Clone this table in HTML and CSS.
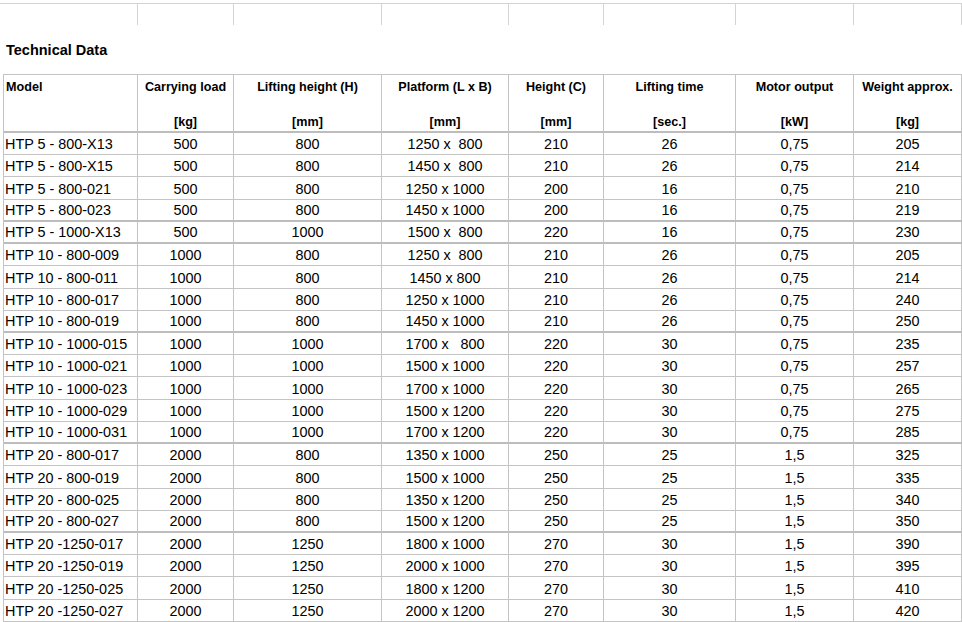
FILE: index.html
```html
<!DOCTYPE html>
<html lang="en">
<head>
<meta charset="utf-8">
<title>Technical Data</title>
<link rel="stylesheet" href="styles.css">
</head>
<body>
<div class="top-strip">
  <div class="strip-cell strip-lead"></div>
  <div class="strip-cell"></div><div class="strip-cell"></div><div class="strip-cell"></div><div class="strip-cell"></div>
  <div class="strip-cell"></div><div class="strip-cell"></div><div class="strip-cell"></div><div class="strip-cell"></div>
</div>
<h1 class="title">Technical Data</h1>
<div class="sheet">
  <div class="row head sep">
    <div class="cell left"><span class="h1l">Model</span></div>
    <div class="cell"><span class="h1l">Carrying load</span><span class="unit">[kg]</span></div>
    <div class="cell"><span class="h1l">Lifting height (H)</span><span class="unit">[mm]</span></div>
    <div class="cell"><span class="h1l">Platform (L x B)</span><span class="unit">[mm]</span></div>
    <div class="cell"><span class="h1l">Height (C)</span><span class="unit">[mm]</span></div>
    <div class="cell"><span class="h1l">Lifting time</span><span class="unit">[sec.]</span></div>
    <div class="cell"><span class="h1l">Motor output</span><span class="unit">[kW]</span></div>
    <div class="cell"><span class="h1l">Weight approx.</span><span class="unit">[kg]</span></div>
  </div>
  <div class="row"><div class="cell left">HTP 5 - 800-X13</div><div class="cell">500</div><div class="cell">800</div><div class="cell">1250 x  800</div><div class="cell">210</div><div class="cell">26</div><div class="cell">0,75</div><div class="cell">205</div></div>
  <div class="row"><div class="cell left">HTP 5 - 800-X15</div><div class="cell">500</div><div class="cell">800</div><div class="cell">1450 x  800</div><div class="cell">210</div><div class="cell">26</div><div class="cell">0,75</div><div class="cell">214</div></div>
  <div class="row"><div class="cell left">HTP 5 - 800-021</div><div class="cell">500</div><div class="cell">800</div><div class="cell">1250 x 1000</div><div class="cell">200</div><div class="cell">16</div><div class="cell">0,75</div><div class="cell">210</div></div>
  <div class="row sep"><div class="cell left">HTP 5 - 800-023</div><div class="cell">500</div><div class="cell">800</div><div class="cell">1450 x 1000</div><div class="cell">200</div><div class="cell">16</div><div class="cell">0,75</div><div class="cell">219</div></div>
  <div class="row sep"><div class="cell left">HTP 5 - 1000-X13</div><div class="cell">500</div><div class="cell">1000</div><div class="cell">1500 x  800</div><div class="cell">220</div><div class="cell">16</div><div class="cell">0,75</div><div class="cell">230</div></div>
  <div class="row"><div class="cell left">HTP 10 - 800-009</div><div class="cell">1000</div><div class="cell">800</div><div class="cell">1250 x  800</div><div class="cell">210</div><div class="cell">26</div><div class="cell">0,75</div><div class="cell">205</div></div>
  <div class="row"><div class="cell left">HTP 10 - 800-011</div><div class="cell">1000</div><div class="cell">800</div><div class="cell">1450 x 800</div><div class="cell">210</div><div class="cell">26</div><div class="cell">0,75</div><div class="cell">214</div></div>
  <div class="row"><div class="cell left">HTP 10 - 800-017</div><div class="cell">1000</div><div class="cell">800</div><div class="cell">1250 x 1000</div><div class="cell">210</div><div class="cell">26</div><div class="cell">0,75</div><div class="cell">240</div></div>
  <div class="row sep"><div class="cell left">HTP 10 - 800-019</div><div class="cell">1000</div><div class="cell">800</div><div class="cell">1450 x 1000</div><div class="cell">210</div><div class="cell">26</div><div class="cell">0,75</div><div class="cell">250</div></div>
  <div class="row"><div class="cell left">HTP 10 - 1000-015</div><div class="cell">1000</div><div class="cell">1000</div><div class="cell">1700 x   800</div><div class="cell">220</div><div class="cell">30</div><div class="cell">0,75</div><div class="cell">235</div></div>
  <div class="row"><div class="cell left">HTP 10 - 1000-021</div><div class="cell">1000</div><div class="cell">1000</div><div class="cell">1500 x 1000</div><div class="cell">220</div><div class="cell">30</div><div class="cell">0,75</div><div class="cell">257</div></div>
  <div class="row"><div class="cell left">HTP 10 - 1000-023</div><div class="cell">1000</div><div class="cell">1000</div><div class="cell">1700 x 1000</div><div class="cell">220</div><div class="cell">30</div><div class="cell">0,75</div><div class="cell">265</div></div>
  <div class="row"><div class="cell left">HTP 10 - 1000-029</div><div class="cell">1000</div><div class="cell">1000</div><div class="cell">1500 x 1200</div><div class="cell">220</div><div class="cell">30</div><div class="cell">0,75</div><div class="cell">275</div></div>
  <div class="row sep"><div class="cell left">HTP 10 - 1000-031</div><div class="cell">1000</div><div class="cell">1000</div><div class="cell">1700 x 1200</div><div class="cell">220</div><div class="cell">30</div><div class="cell">0,75</div><div class="cell">285</div></div>
  <div class="row"><div class="cell left">HTP 20 - 800-017</div><div class="cell">2000</div><div class="cell">800</div><div class="cell">1350 x 1000</div><div class="cell">250</div><div class="cell">25</div><div class="cell">1,5</div><div class="cell">325</div></div>
  <div class="row"><div class="cell left">HTP 20 - 800-019</div><div class="cell">2000</div><div class="cell">800</div><div class="cell">1500 x 1000</div><div class="cell">250</div><div class="cell">25</div><div class="cell">1,5</div><div class="cell">335</div></div>
  <div class="row"><div class="cell left">HTP 20 - 800-025</div><div class="cell">2000</div><div class="cell">800</div><div class="cell">1350 x 1200</div><div class="cell">250</div><div class="cell">25</div><div class="cell">1,5</div><div class="cell">340</div></div>
  <div class="row sep"><div class="cell left">HTP 20 - 800-027</div><div class="cell">2000</div><div class="cell">800</div><div class="cell">1500 x 1200</div><div class="cell">250</div><div class="cell">25</div><div class="cell">1,5</div><div class="cell">350</div></div>
  <div class="row"><div class="cell left">HTP 20 -1250-017</div><div class="cell">2000</div><div class="cell">1250</div><div class="cell">1800 x 1000</div><div class="cell">270</div><div class="cell">30</div><div class="cell">1,5</div><div class="cell">390</div></div>
  <div class="row"><div class="cell left">HTP 20 -1250-019</div><div class="cell">2000</div><div class="cell">1250</div><div class="cell">2000 x 1000</div><div class="cell">270</div><div class="cell">30</div><div class="cell">1,5</div><div class="cell">395</div></div>
  <div class="row"><div class="cell left">HTP 20 -1250-025</div><div class="cell">2000</div><div class="cell">1250</div><div class="cell">1800 x 1200</div><div class="cell">270</div><div class="cell">30</div><div class="cell">1,5</div><div class="cell">410</div></div>
  <div class="row"><div class="cell left">HTP 20 -1250-027</div><div class="cell">2000</div><div class="cell">1250</div><div class="cell">2000 x 1200</div><div class="cell">270</div><div class="cell">30</div><div class="cell">1,5</div><div class="cell">420</div></div>
</div>
</body>
</html>
```
FILE: styles.css
```css
* { box-sizing: border-box; }
html, body {
  margin: 0;
  padding: 0;
  background: #ffffff;
  color: #000000;
  font-family: "Liberation Sans", Arial, sans-serif;
  overflow: hidden;
}
.top-strip {
  margin-top: 3px;
  height: 22px;
  border-top: 1px solid #d4d4d4;
  display: grid;
  grid-template-columns: 4px 134px 96px 148px 127px 95px 132px 118px 108px;
}
.strip-cell {
  border-right: 1px solid #d4d4d4;
}
.strip-lead {
  border-right: none;
}
.title {
  margin: 17px 0 0 0;
  padding-left: 6px;
  font-size: 14.5px;
  line-height: 16px;
  font-weight: bold;
}
.sheet {
  margin: 16px 0 0 3px;
  width: 959px;
  border-left: 1px solid #c4c4c4;
  border-top: 1px solid #c4c4c4;
}
.row {
  display: grid;
  grid-template-columns: 134px 96px 148px 127px 95px 132px 118px 108px;
  height: 22.23px;
  border-bottom: 1px solid #c4c4c4;
}
.row.sep {
  border-bottom: 2px solid #bdbdbd;
}
.row.head {
  height: 58px;
}
.cell {
  border-right: 1px solid #c4c4c4;
  display: flex;
  align-items: flex-end;
  justify-content: center;
  font-size: 14.4px;
  line-height: 16px;
  padding-bottom: 2px;
  white-space: pre;
}
.cell.left {
  justify-content: flex-start;
  padding-left: 1px;
}
.head .cell {
  flex-direction: column;
  align-items: center;
  justify-content: flex-start;
  font-size: 12.6px;
  line-height: 15px;
  font-weight: bold;
  padding: 5px 0 0 0;
}
.head .cell.left {
  align-items: flex-start;
  padding-left: 2px;
}
.unit {
  margin-top: 20px;
}
```
